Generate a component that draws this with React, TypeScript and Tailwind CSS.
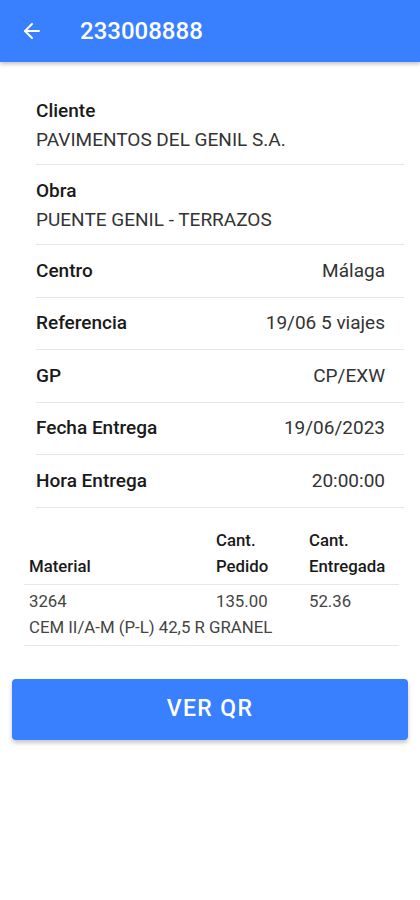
import { ArrowLeft } from "lucide-react";

const stacked = [
  { label: "Cliente", value: "PAVIMENTOS DEL GENIL S.A." },
  { label: "Obra", value: "PUENTE GENIL - TERRAZOS" },
];

const rows = [
  { label: "Centro", value: "Málaga" },
  { label: "Referencia", value: "19/06 5 viajes" },
  { label: "GP", value: "CP/EXW" },
  { label: "Fecha Entrega", value: "19/06/2023" },
  { label: "Hora Entrega", value: "20:00:00" },
];

export default function App() {
  return (
    <div className="min-h-[900px] bg-white font-['Roboto',sans-serif] text-[#222]">
      <header className="h-[62px] bg-[#3880ff] flex items-center shadow-[0_2px_4px_rgba(0,0,0,0.25)]">
        <button className="w-[62px] pl-[20px] text-white">
          <ArrowLeft size={24} strokeWidth={2} />
        </button>
        <h1 className="ml-[18px] text-[24px] font-medium text-white">233008888</h1>
      </header>

      <main className="pt-[23px]">
        <div className="ml-[36px] mr-[16px]">
          {stacked.map((item) => (
            <div key={item.label} className="border-b border-[#e6e6e6] pt-[15px] pb-[13px]">
              <p className="text-[19px] leading-[22px] font-medium text-[#1a1a1a]">{item.label}</p>
              <p className="mt-[7px] text-[19px] leading-[22px] text-[#333]">{item.value}</p>
            </div>
          ))}
          {rows.map((row) => (
            <div
              key={row.label}
              className="h-[52.6px] border-b border-[#e6e6e6] flex items-center justify-between pr-[19px]"
            >
              <span className="text-[19px] font-medium text-[#1a1a1a]">{row.label}</span>
              <span className="text-[19px] text-[#333]">{row.value}</span>
            </div>
          ))}
        </div>

        <table className="mt-[19px] ml-[24px] w-[375px] table-fixed text-[16.8px] leading-[26px] border-collapse">
          <thead>
            <tr className="border-b border-[#e6e6e6]">
              <th className="w-[187px] px-[5px] pb-[5px] text-left align-bottom font-medium text-[#1a1a1a]">Material</th>
              <th className="w-[93px] px-[5px] pb-[5px] text-left align-bottom font-medium text-[#1a1a1a]">
                Cant.
                <br />
                Pedido
              </th>
              <th className="px-[5px] pb-[5px] text-left align-bottom font-medium text-[#1a1a1a]">
                Cant.
                <br />
                Entregada
              </th>
            </tr>
          </thead>
          <tbody>
            <tr className="border-b border-[#e6e6e6]">
              <td className="px-[5px] pt-[3px] pb-[5px] align-top text-[#444] whitespace-nowrap">
                3264
                <br />
                CEM II/A-M (P-L) 42,5 R GRANEL
              </td>
              <td className="px-[5px] pt-[3px] pb-[5px] align-top text-[#444]">135.00</td>
              <td className="px-[5px] pt-[3px] pb-[5px] align-top text-[#444]">52.36</td>
            </tr>
          </tbody>
        </table>

        <div className="px-[12px] mt-[33px]">
          <button className="w-full h-[61px] rounded-[4px] bg-[#3880ff] text-white text-[23px] font-medium tracking-[0.06em] shadow-[0_3px_4px_rgba(0,0,0,0.22)]">
            VER QR
          </button>
        </div>
      </main>
    </div>
  );
}
